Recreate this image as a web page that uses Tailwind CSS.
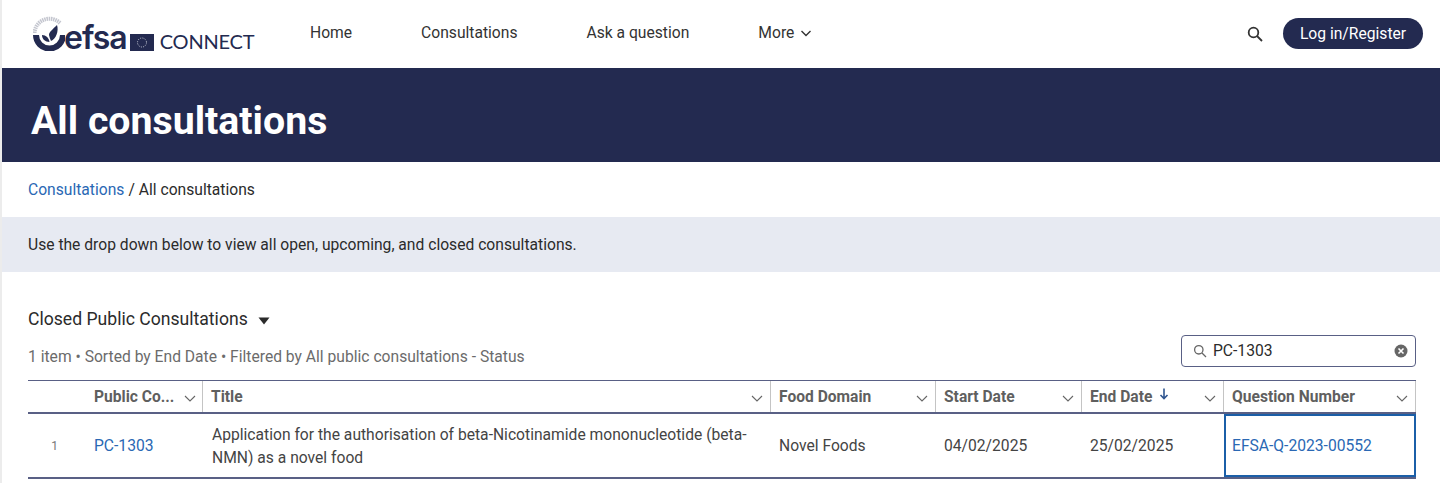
<!doctype html>
<html lang="en">
<head>
<meta charset="utf-8">
<title>All consultations</title>
<script src="https://cdn.jsdelivr.net/npm/@tailwindcss/browser@4"></script>
</head>
<body class="bg-white font-['Roboto',sans-serif] text-[#2b2b2b] overflow-hidden">
<div class="h-[483px] overflow-hidden border-l-2 border-[#ececec]">

  <!-- Nav -->
  <header class="h-[68px] flex items-center">
    <div class="w-[278px] pl-[31px] flex items-end h-[68px] pb-[17px] shrink-0">
      <svg class="w-[32px] h-[35px] shrink-0" viewBox="0 0 32 35" fill="none">
        <path d="M1.5 17 A15 15 0 0 1 27 7" stroke="#c4c6cf" stroke-width="4" stroke-dasharray="1.5 0.7"/>
        <path d="M3 19 a13.5 13.5 0 0 0 27 0" stroke="#232a50" stroke-width="6"/>
        <path d="M9 19 C13 19 16 22 16.5 26 C12 26 9 23 9 19Z" fill="#232a50"/>
        <path d="M16 19 C16 16 20 13 24 9 C26 15 23 23 18 25 C17 23 16.5 21 16 19Z" fill="#232a50"/>
      </svg>
      <span class="font-['Inter',sans-serif] text-[32px] leading-[34px] font-semibold text-[#232a50] tracking-[-1px] -mb-[4px] -ml-[1px]">efsa</span>
      <svg class="w-[24px] h-[17px] ml-[3px] shrink-0" viewBox="0 0 24 17">
        <rect width="24" height="17" fill="#232a50"/>
        <circle cx="12" cy="8.5" r="4.5" fill="none" stroke="#cfd2dc" stroke-width="1" stroke-dasharray="1 1.35"/>
      </svg>
      <span class="font-['Lato',sans-serif] text-[20px] leading-[20px] text-[#232a50] ml-[6px] tracking-[-0.2px]">CONNECT</span>
    </div>
    <nav class="flex items-center text-[15.65px] text-[#333] -mt-[2px]">
      <a class="ml-[30px]">Home</a>
      <a class="ml-[69px]">Consultations</a>
      <a class="ml-[69px]">Ask a question</a>
      <a class="ml-[69px] flex items-center gap-[6px]">More
        <svg class="w-[12px] h-[12px]" viewBox="0 0 12 12" fill="none" stroke="#333" stroke-width="1.4"><path d="M1.5 4 L6 8.5 L10.5 4"/></svg>
      </a>
    </nav>
    <div class="ml-auto flex items-center pr-[17px] -mt-[1px]">
      <svg class="w-[16px] h-[16px]" viewBox="0 0 16 16" fill="none" stroke="#333" stroke-width="1.8"><circle cx="6.5" cy="6.5" r="4.8"/><path d="M10 10 L15 15"/></svg>
      <button class="ml-[20px] h-[31px] w-[140px] rounded-full bg-[#232a50] text-white text-[15.65px]">Log in/Register</button>
    </div>
  </header>

  <!-- Banner -->
  <div class="h-[94px] bg-[#232a50] flex items-center pl-[29px] pt-[12px]">
    <h1 class="text-[39.25px] leading-[50px] font-bold text-white">All consultations</h1>
  </div>

  <!-- Breadcrumb -->
  <div class="h-[55px] pl-[26px] flex items-center text-[15.65px]">
    <a class="text-[#2a68b4]">Consultations</a><span class="ml-[4px]">/ All consultations</span>
  </div>

  <!-- Info band -->
  <div class="h-[55px] bg-[#e7eaf2] pl-[26px] flex items-center text-[15.65px]">
    Use the drop down below to view all open, upcoming, and closed consultations.
  </div>

  <!-- List header -->
  <div class="pl-[26px] pr-[24px] h-[108px] flex items-end justify-between pb-[13px]">
    <div>
      <div class="flex items-center text-[17.6px] leading-[24px] text-[#2b2b2b]">
        Closed Public Consultations
        <svg class="w-[12px] h-[8px] ml-[10px] mt-[3px]" viewBox="0 0 12 8" fill="#2b2b2b"><path d="M0.5 0.5 H11.5 L6 7.5 Z"/></svg>
      </div>
      <p class="mt-[16px] text-[15.65px] leading-[20px] text-[#6b6b6b]">1 item • Sorted by End Date • Filtered by All public consultations - Status</p>
    </div>
    <div class="w-[235px] h-[32px] rounded-[4px] border border-[#596085] flex items-center pl-[11px] pr-[7px] text-[15.65px]">
      <svg class="w-[14px] h-[14px] shrink-0" viewBox="0 0 14 14" fill="none" stroke="#666" stroke-width="1.3"><circle cx="5.8" cy="5.8" r="4.2"/><path d="M9 9 L13 13"/></svg>
      <span class="ml-[6px]">PC-1303</span>
      <svg class="ml-auto w-[14px] h-[14px]" viewBox="0 0 14 14"><circle cx="7" cy="7" r="6.5" fill="#666"/><path d="M4.5 4.5 L9.5 9.5 M9.5 4.5 L4.5 9.5" stroke="#fff" stroke-width="1.6"/></svg>
    </div>
  </div>

  <!-- Table -->
  <div class="ml-[26px] w-[1388px] text-[15.65px]">
    <div class="grid grid-cols-[58px_117px_568px_165px_146px_142px_192px] h-[34px] border-y border-[#596085] border-b-2 font-bold text-[#5f5f5f] text-[15.6px]">
      <div></div>
      <div class="flex items-center pl-[8px] pr-[6px] border-r border-[#c4c4c4]">
        <span class="mt-[2px]">Public Co...</span>
        <svg class="ml-auto w-[12px] h-[12px] mt-[2px]" viewBox="0 0 12 12" fill="none" stroke="#666" stroke-width="1.1"><path d="M1 4 L6 9 L11 4"/></svg>
      </div>
      <div class="flex items-center pl-[8px] pr-[7px] border-r border-[#c4c4c4]">
        <span class="mt-[2px]">Title</span>
        <svg class="ml-auto w-[12px] h-[12px] mt-[2px]" viewBox="0 0 12 12" fill="none" stroke="#666" stroke-width="1.1"><path d="M1 4 L6 9 L11 4"/></svg>
      </div>
      <div class="flex items-center pl-[8px] pr-[7px] border-r border-[#c4c4c4]">
        <span class="mt-[2px]">Food Domain</span>
        <svg class="ml-auto w-[12px] h-[12px] mt-[2px]" viewBox="0 0 12 12" fill="none" stroke="#666" stroke-width="1.1"><path d="M1 4 L6 9 L11 4"/></svg>
      </div>
      <div class="flex items-center pl-[8px] pr-[7px] border-r border-[#c4c4c4]">
        <span class="mt-[2px]">Start Date</span>
        <svg class="ml-auto w-[12px] h-[12px] mt-[2px]" viewBox="0 0 12 12" fill="none" stroke="#666" stroke-width="1.1"><path d="M1 4 L6 9 L11 4"/></svg>
      </div>
      <div class="flex items-center pl-[8px] pr-[7px] border-r border-[#c4c4c4]">
        <span class="mt-[2px]">End Date</span>
        <svg class="ml-[7px] w-[10px] h-[12px] -mt-[6px]" viewBox="0 0 10 12" fill="none" stroke="#2f5590" stroke-width="1.6"><path d="M5 0.5 V10.5 M1.5 7 L5 10.5 L8.5 7"/></svg>
        <svg class="ml-auto w-[12px] h-[12px] mt-[2px]" viewBox="0 0 12 12" fill="none" stroke="#666" stroke-width="1.1"><path d="M1 4 L6 9 L11 4"/></svg>
      </div>
      <div class="flex items-center pl-[8px] pr-[7px] border-r border-[#c4c4c4]">
        <span class="mt-[2px]">Question Number</span>
        <svg class="ml-auto w-[12px] h-[12px] mt-[2px]" viewBox="0 0 12 12" fill="none" stroke="#666" stroke-width="1.1"><path d="M1 4 L6 9 L11 4"/></svg>
      </div>
    </div>
    <div class="grid grid-cols-[58px_117px_568px_165px_146px_142px_192px] h-[65px] border-b-2 border-[#596085] items-center text-[#444]">
      <div class="text-[12px] text-[#777] text-center -ml-[5px]">1</div>
      <a class="pl-[8px] text-[#2a68b4]">PC-1303</a>
      <div class="pl-[9px] pr-[14px] leading-[23px]">Application for the authorisation of beta-Nicotinamide mononucleotide (beta-NMN) as a novel food</div>
      <div class="pl-[8px]">Novel Foods</div>
      <div class="pl-[8px]">04/02/2025</div>
      <div class="pl-[8px]">25/02/2025</div>
      <div class="h-full pl-[6px] flex items-center border-2 border-[#1b5fa8] text-[#2a68b4]">EFSA-Q-2023-00552</div>
    </div>
  </div>
</div>
</body>
</html>
